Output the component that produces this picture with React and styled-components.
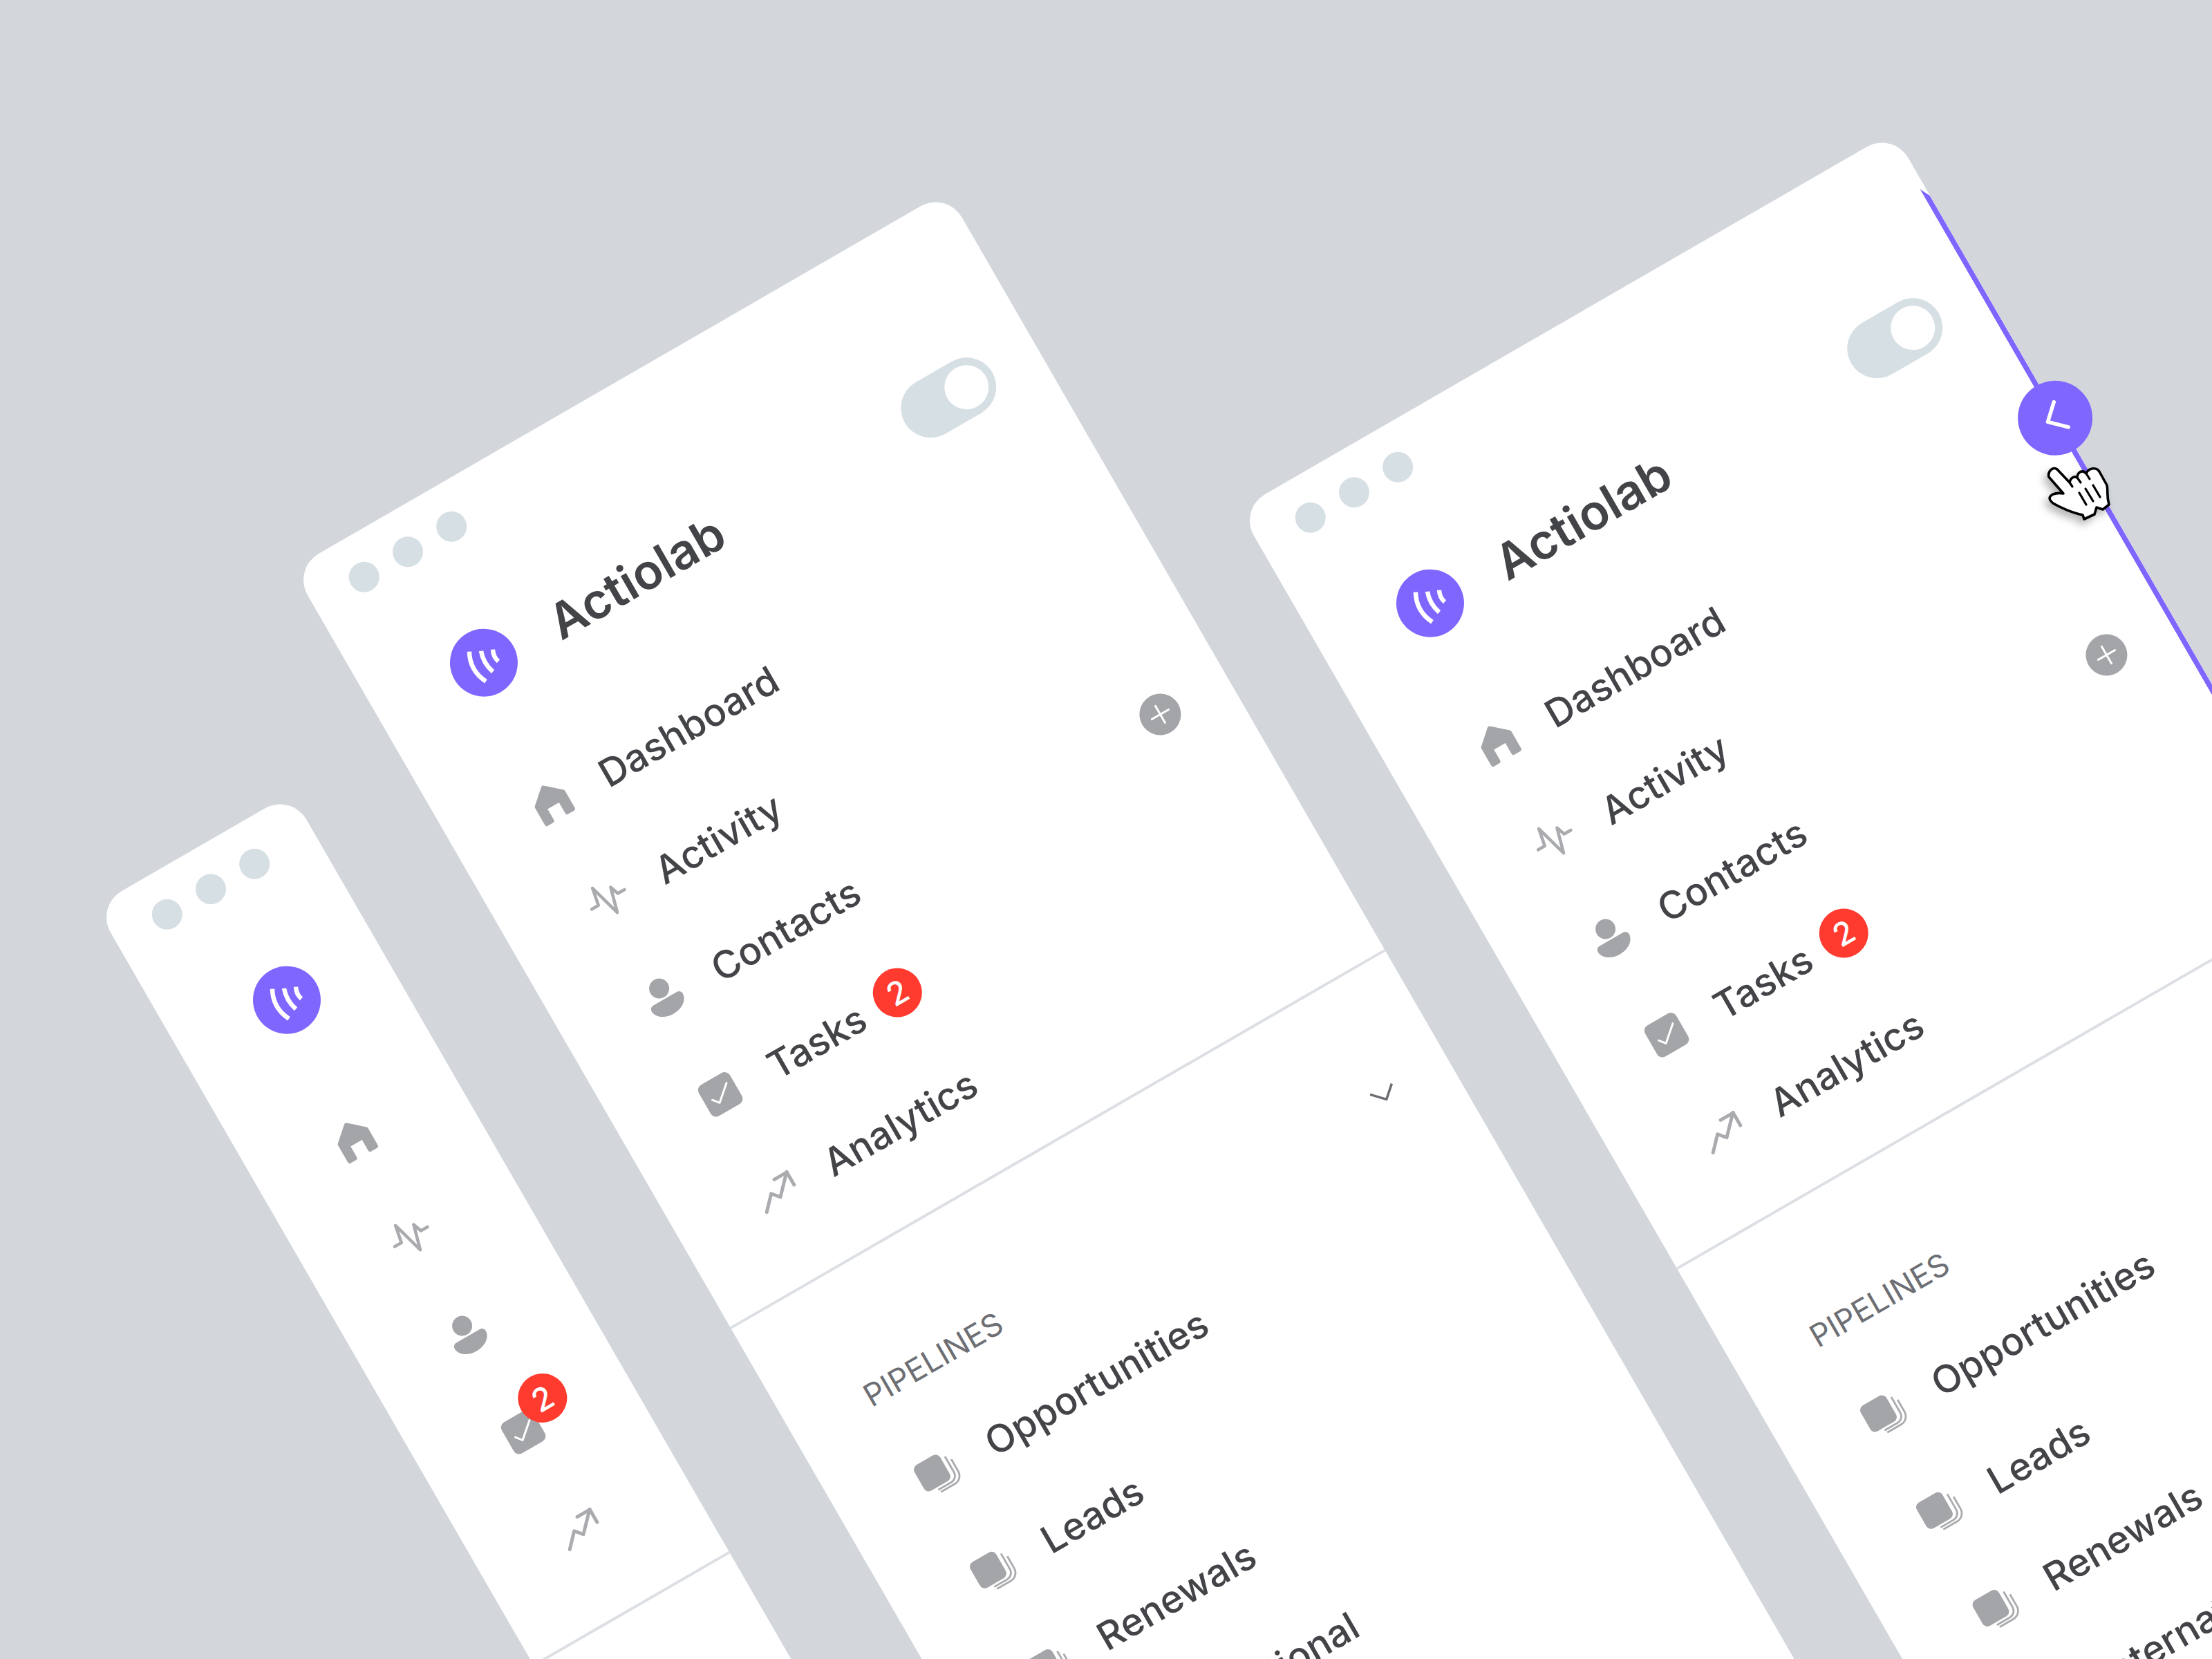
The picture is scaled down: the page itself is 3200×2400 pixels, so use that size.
import React from "react";
import styled, { createGlobalStyle } from "styled-components";

const GREY = "#a3a5a8";
const PURPLE = "#7f66ff";

const GlobalStyle = createGlobalStyle`
  html, body {
    margin: 0;
    padding: 0;
    background: #d3d7dc;
  }
  body {
    font-family: Inter, "Liberation Sans", sans-serif;
    color: #434448;
  }
`;

const Canvas = styled.div`
  position: relative;
  width: 3200px;
  height: 2400px;
  overflow: hidden;
  background: #d3d7dc;
`;

const Window = styled.div`
  position: absolute;
  left: ${(p) => p.$x}px;
  top: ${(p) => p.$y}px;
  width: ${(p) => p.$width}px;
  height: 2500px;
  display: flex;
  flex-direction: column;
  background: #fff;
  border-radius: 44px 44px 0 0;
  transform: rotate(-30deg);
  transform-origin: 0 0;
`;

const Dots = styled.div`
  display: flex;
  gap: 29px;
  padding: 40px 0 0 62px;
`;

const Dot = styled.span`
  width: 44px;
  height: 44px;
  border-radius: 50%;
  background: #d6dfe4;
`;

const Brand = styled.div`
  display: flex;
  align-items: center;
  height: 98px;
  margin-top: 123px;
  padding: 0 74px 0 123px;
`;

const Logo = styled.div`
  flex: none;
  width: 98px;
  height: 98px;
  border-radius: 50%;
  background: ${PURPLE};
  svg {
    display: block;
  }
`;

const Title = styled.h1`
  margin: 8px 0 0 64px;
  font-size: 70.5px;
  line-height: 1;
  font-weight: 600;
  letter-spacing: 0;
  color: #434448;
`;

const Toggle = styled.div`
  flex: none;
  display: flex;
  justify-content: flex-end;
  align-items: center;
  width: 146px;
  height: 86px;
  margin: 8px 0 0 auto;
  padding: 0 11px;
  box-sizing: border-box;
  border-radius: 43px;
  background: #d6dfe4;
`;

const ToggleKnob = styled.span`
  width: 64px;
  height: 64px;
  border-radius: 50%;
  background: #fff;
`;

const Nav = styled.nav`
  margin-top: 94px;
`;

const Row = styled.div`
  display: flex;
  align-items: center;
  height: 162.7px;
  padding: 0 81px 0 120.5px;
`;

const IconSlot = styled.div`
  position: relative;
  flex: none;
  display: flex;
  justify-content: center;
  align-items: center;
  width: 70px;
  height: 60px;
  svg {
    display: block;
    overflow: visible;
  }
`;

const Label = styled.span`
  margin: 6px 0 0 47px;
  font-size: 55.5px;
  line-height: 1;
  font-weight: 500;
  white-space: nowrap;
  color: #434448;
`;

const Badge = styled.span`
  display: flex;
  align-items: center;
  justify-content: center;
  flex: none;
  width: 71px;
  height: 71px;
  margin-left: 24px;
  border-radius: 50%;
  background: #ff3b30;
  color: #fff;
  font-size: 46px;
  font-weight: 500;
  line-height: 1;
`;

// sits on top of the tasks icon when the sidebar is collapsed
const IconBadge = styled(Badge)`
  position: absolute;
  left: 48px;
  top: -34px;
  margin: 0;
`;

const AddButton = styled.button`
  display: flex;
  align-items: center;
  justify-content: center;
  width: 60px;
  height: 60px;
  margin: 8px 0 0 auto;
  padding: 0;
  border: 0;
  border-radius: 50%;
  background: ${GREY};
`;

const Divider = styled.hr`
  height: 4px;
  margin: 54px 0 0;
  border: 0;
  background: #dcdfe3;
`;

const SectionHead = styled.div`
  display: flex;
  align-items: center;
  justify-content: space-between;
  height: 60px;
  margin-top: 151px;
  padding: 0 85px 0 119px;
`;

const SectionTitle = styled.span`
  font-size: 45px;
  line-height: 1;
  font-weight: 400;
  color: #6d6f74;
  margin-top: 4px;
`;

const ChevronWrap = styled.span`
  display: flex;
  margin-bottom: 8px;
`;

const Pipelines = styled.div`
  margin-top: 35px;
`;

const Handle = styled.div`
  position: absolute;
  right: -50px;
  top: 422px;
  display: flex;
  align-items: center;
  justify-content: center;
  width: 108px;
  height: 108px;
  border-radius: 50%;
  background: ${PURPLE};
`;

const EdgeLine = styled.div`
  position: absolute;
  right: 0;
  top: 91px;
  bottom: 0;
  width: 8px;
  background: ${PURPLE};
  clip-path: polygon(0 0, 100% 16px, 100% 100%, 0 100%);
`;

const Cursor = styled.svg`
  position: absolute;
  left: 2950px;
  top: 660px;
  filter: drop-shadow(-5px 7px 6px rgba(0, 0, 0, 0.28));
`;

const LogoMark = () => (
  <svg width="98" height="98" viewBox="0 0 98 98" fill="none" stroke="#fff" strokeWidth="6.5">
    <path d="M38.8 24.6Q25.5 49 38.1 73.9" />
    <path d="M54 32.3Q47.8 49 53.8 66.8" />
    <path d="M69.8 39Q64.8 49 68.2 57.8" />
  </svg>
);

const HomeIcon = () => (
  <svg width="60" height="60" viewBox="0 0 60 60" fill={GREY} stroke={GREY} strokeWidth="6" strokeLinejoin="round">
    <path d="M30 5.5L52 25V53.5H42V32.5H17V53.5H8V25Z" />
  </svg>
);

const ActivityIcon = () => (
  <svg width="60" height="60" viewBox="0 0 60 60" fill="none" stroke="#a9abae" strokeWidth="4.6" strokeLinecap="round" strokeLinejoin="round">
    <path d="M3 30H14L19 4L32.5 52.5L42.5 16L47 29H58" />
  </svg>
);

const ContactIcon = () => (
  <svg width="60" height="60" viewBox="0 0 60 60" fill={GREY}>
    <circle cx="30" cy="15" r="14.5" />
    <path d="M10 32H50A6 6 0 0 1 56 38C56 49 44 57 30 57C16 57 4 49 4 38A6 6 0 0 1 10 32Z" />
  </svg>
);

const TaskIcon = () => (
  <svg width="60" height="60" viewBox="0 0 60 60" fill="none">
    <rect x="4" y="4" width="52" height="52" rx="9" fill={GREY} />
    <path d="M16 31L23 40L46 20" stroke="#fff" strokeWidth="3" strokeLinecap="round" strokeLinejoin="round" />
  </svg>
);

const TrendIcon = () => (
  <svg width="60" height="60" viewBox="0 0 60 60" fill="none" stroke="#a9abae" strokeWidth="5" strokeLinecap="round" strokeLinejoin="round">
    <path d="M3 48L22 28L31 39L57 12" />
    <path d="M36 12.5H57V33.6" />
  </svg>
);

const StackIcon = () => (
  <svg width="70" height="60" viewBox="0 0 70 60" fill="none">
    <rect x="5" y="6" width="43" height="43" rx="8" fill={GREY} />
    <path d="M54.5 16V42A11 11 0 0 1 43.5 53H22" stroke="#a9abae" strokeWidth="2.8" />
    <path d="M60.5 24V44A13.5 13.5 0 0 1 47 57.5H24" stroke="#a9abae" strokeWidth="2.8" />
  </svg>
);

const PlusIcon = () => (
  <svg width="32" height="32" viewBox="0 0 32 32" stroke="#fff" strokeWidth="3" strokeLinecap="round">
    <path d="M2 16H30M16 2V30" />
  </svg>
);

const Chevron = () => (
  <ChevronWrap>
    <svg width="40" height="24" viewBox="0 0 40 24" fill="none" stroke="#6b6d72" strokeWidth="3.5" strokeLinejoin="round">
      <path d="M2 3L19 21L37 5" />
    </svg>
  </ChevronWrap>
);

const HandleChevron = () => (
  <svg width="36" height="50" viewBox="0 0 36 50" fill="none" stroke="#fff" strokeWidth="5.5" strokeLinecap="round" strokeLinejoin="round">
    <path d="M28 4L6 24.5L28 46" />
  </svg>
);

const HandCursor = () => (
  <Cursor width="120" height="110" viewBox="0 0 120 110">
    <path
      d="M14 30C12 22 20 14 26 19L44 38C45 32 50 28 55 31C55 24 62 18 68 25C72 16 84 15 88 24L98 42C100 50 97 56 101 70L92 77L83 74L80 84L65 91L63 85C48 82 30 74 20 68C13 62 14 58 20 55C25 53 30 53 35 54Z"
      fill="#fff"
      stroke="#000"
      strokeWidth="3.6"
      strokeLinejoin="round"
    />
    <path
      d="M58 53L68 70M67 47L78 65M78 42L88 59M44 38L48 44M55 31L60 38M68 25L73 33"
      fill="none"
      stroke="#000"
      strokeWidth="3.2"
      strokeLinecap="round"
    />
  </Cursor>
);

const NAV = [
  { label: "Dashboard", icon: HomeIcon },
  { label: "Activity", icon: ActivityIcon },
  { label: "Contacts", icon: ContactIcon, add: true },
  { label: "Tasks", icon: TaskIcon, badge: 2 },
  { label: "Analytics", icon: TrendIcon },
];

const PIPELINES = ["Opportunities", "Leads", "Renewals", "International"];

const Sidebar = ({ x, y, width, collapsed, resizing }) => (
  <Window $x={x} $y={y} $width={width}>
    <Dots>
      <Dot />
      <Dot />
      <Dot />
    </Dots>
    <Brand>
      <Logo>
        <LogoMark />
      </Logo>
      {!collapsed && <Title>Actiolab</Title>}
      {!collapsed && (
        <Toggle>
          <ToggleKnob />
        </Toggle>
      )}
    </Brand>
    <Nav>
      {NAV.map(({ label, icon: Icon, badge, add }) => (
        <Row key={label}>
          <IconSlot>
            <Icon />
            {collapsed && badge && <IconBadge>{badge}</IconBadge>}
          </IconSlot>
          {!collapsed && <Label>{label}</Label>}
          {!collapsed && badge && <Badge>{badge}</Badge>}
          {!collapsed && add && (
            <AddButton>
              <PlusIcon />
            </AddButton>
          )}
        </Row>
      ))}
    </Nav>
    <Divider />
    {!collapsed && (
      <>
        <SectionHead>
          <SectionTitle>PIPELINES</SectionTitle>
          <Chevron />
        </SectionHead>
        <Pipelines>
          {PIPELINES.map((name) => (
            <Row key={name}>
              <IconSlot>
                <StackIcon />
              </IconSlot>
              <Label>{name}</Label>
            </Row>
          ))}
        </Pipelines>
      </>
    )}
    {resizing && (
      <>
        <EdgeLine />
        <Handle>
          <HandleChevron />
        </Handle>
      </>
    )}
  </Window>
);

export default function App() {
  return (
    <Canvas>
      <GlobalStyle />
      <Sidebar x={138} y={1311} width={327} collapsed />
      <Sidebar x={423} y={823} width={1093} />
      <Sidebar x={1792} y={737} width={1093} resizing />
      <HandCursor />
    </Canvas>
  );
}
